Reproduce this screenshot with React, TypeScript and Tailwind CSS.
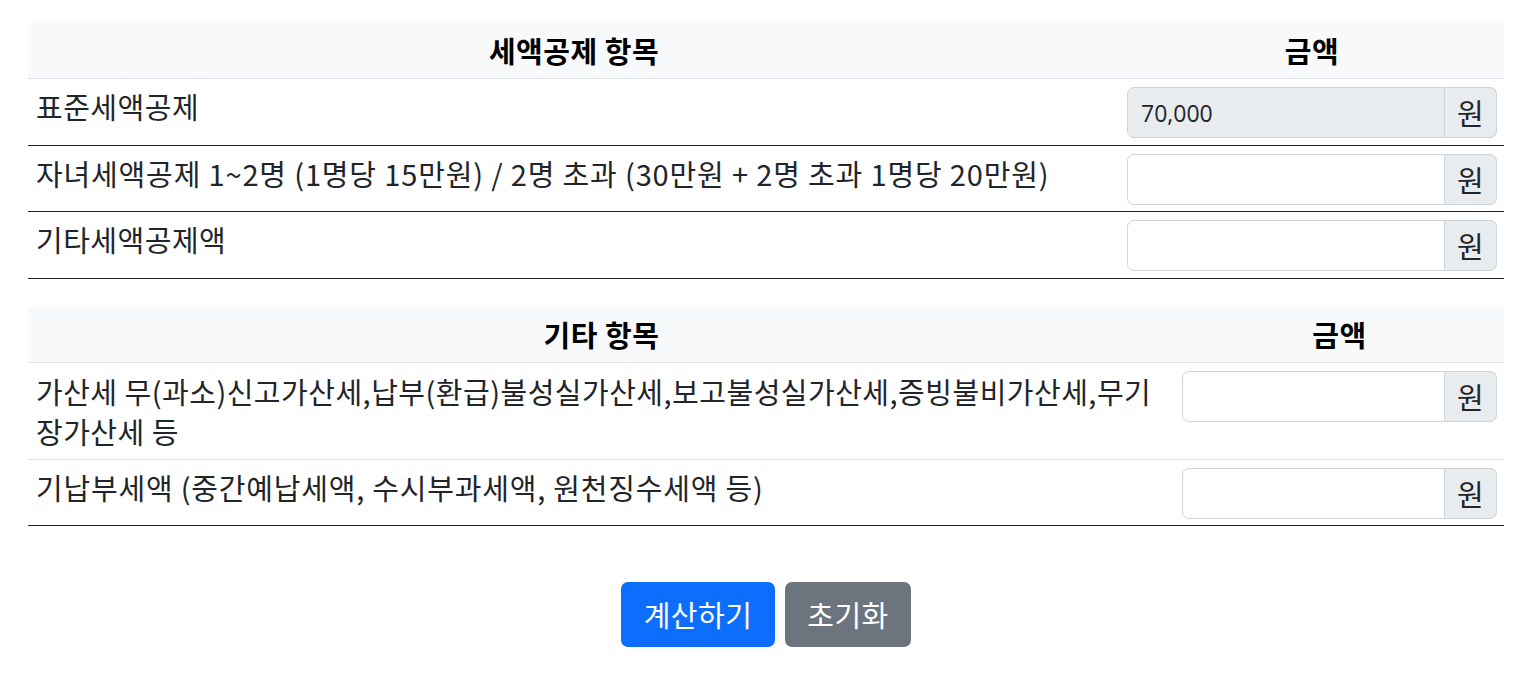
import React from "react";

function InputGroup({ value, readOnly }: { value?: string; readOnly?: boolean }) {
  return (
    <div className="flex h-[51px] w-full">
      <input
        readOnly={readOnly}
        defaultValue={value}
        size={1}
        className={`min-w-0 w-full flex-1 h-full border border-[#ced4da] rounded-l-[7px] pl-[13px] font-['Open_Sans',sans-serif] text-[23px] tracking-normal text-[#212529] outline-none ${readOnly ? "bg-[#e9ecef]" : "bg-white"}`}
      />
      <span className="flex h-full w-[52px] shrink-0 items-center justify-center border border-l-0 border-[#ced4da] bg-[#e9ecef] rounded-r-[7px] text-[#212529]">
        원
      </span>
    </div>
  );
}

const textCell = "px-[8px] pt-[8px] pb-[8px] align-top text-left font-normal";
const inputCell = "px-[7px] pt-[8px] pb-[6.5px] align-top";

export default function App() {
  return (
    <div className="min-h-screen bg-white pl-[28px] pr-[25px] pt-[23px] font-['Noto_Sans_CJK_KR',sans-serif] text-[29px] leading-[39px] tracking-[0.5px] text-[#212529]">
      <table className="w-full table-fixed border-collapse">
        <thead>
          <tr className="bg-[#f8f9fa]">
            <th className="border-b border-[#dee2e6] px-2 py-[8px] text-center font-bold text-black">세액공제 항목</th>
            <th className="w-[384px] border-b border-[#dee2e6] px-2 py-[8px] text-center font-bold text-black">금액</th>
          </tr>
        </thead>
        <tbody>
          <tr>
            <td className={`${textCell} border-b border-[#212529]`}>표준세액공제</td>
            <td className={`${inputCell} border-b border-[#212529]`}>
              <InputGroup value="70,000" readOnly />
            </td>
          </tr>
          <tr>
            <td className={`${textCell} border-b border-[#212529] whitespace-nowrap tracking-[0.85px]`}>
              자녀세액공제 1~2명 (1명당 15만원) / 2명 초과 (30만원 + 2명 초과 1명당 20만원)
            </td>
            <td className={`${inputCell} border-b border-[#212529]`}>
              <InputGroup />
            </td>
          </tr>
          <tr>
            <td className={`${textCell} border-b border-[#212529]`}>기타세액공제액</td>
            <td className={`${inputCell} border-b border-[#212529]`}>
              <InputGroup />
            </td>
          </tr>
        </tbody>
      </table>

      <table className="mt-[28px] w-full table-fixed border-collapse">
        <thead>
          <tr className="bg-[#f8f9fa]">
            <th className="border-b border-[#dee2e6] px-2 py-[8px] text-center font-bold text-black">기타 항목</th>
            <th className="w-[329px] border-b border-[#dee2e6] px-2 py-[8px] text-center font-bold text-black">금액</th>
          </tr>
        </thead>
        <tbody>
          <tr>
            <td className={`${textCell} border-b border-[#dee2e6] leading-[40px]`}>
              <span className="whitespace-nowrap">가산세 무(과소)신고가산세,납부(환급)불성실가산세,보고불성실가산세,증빙불비가산세,무기</span>
              <br />
              <span className="whitespace-nowrap">장가산세 등</span>
            </td>
            <td className={`${inputCell} border-b border-[#dee2e6]`}>
              <InputGroup />
            </td>
          </tr>
          <tr>
            <td className={`${textCell} border-b border-[#212529] tracking-[0.8px]`}>
              기납부세액 (중간예납세액, 수시부과세액, 원천징수세액 등)
            </td>
            <td className={`${inputCell} border-b border-[#212529]`}>
              <InputGroup />
            </td>
          </tr>
        </tbody>
      </table>

      <div className="mt-[56px] flex justify-center gap-[10px]">
        <button className="h-[65px] w-[154px] rounded-[7px] bg-[#0d6efd] text-white">계산하기</button>
        <button className="h-[65px] w-[126px] rounded-[7px] bg-[#6c757d] text-white">초기화</button>
      </div>
    </div>
  );
}
